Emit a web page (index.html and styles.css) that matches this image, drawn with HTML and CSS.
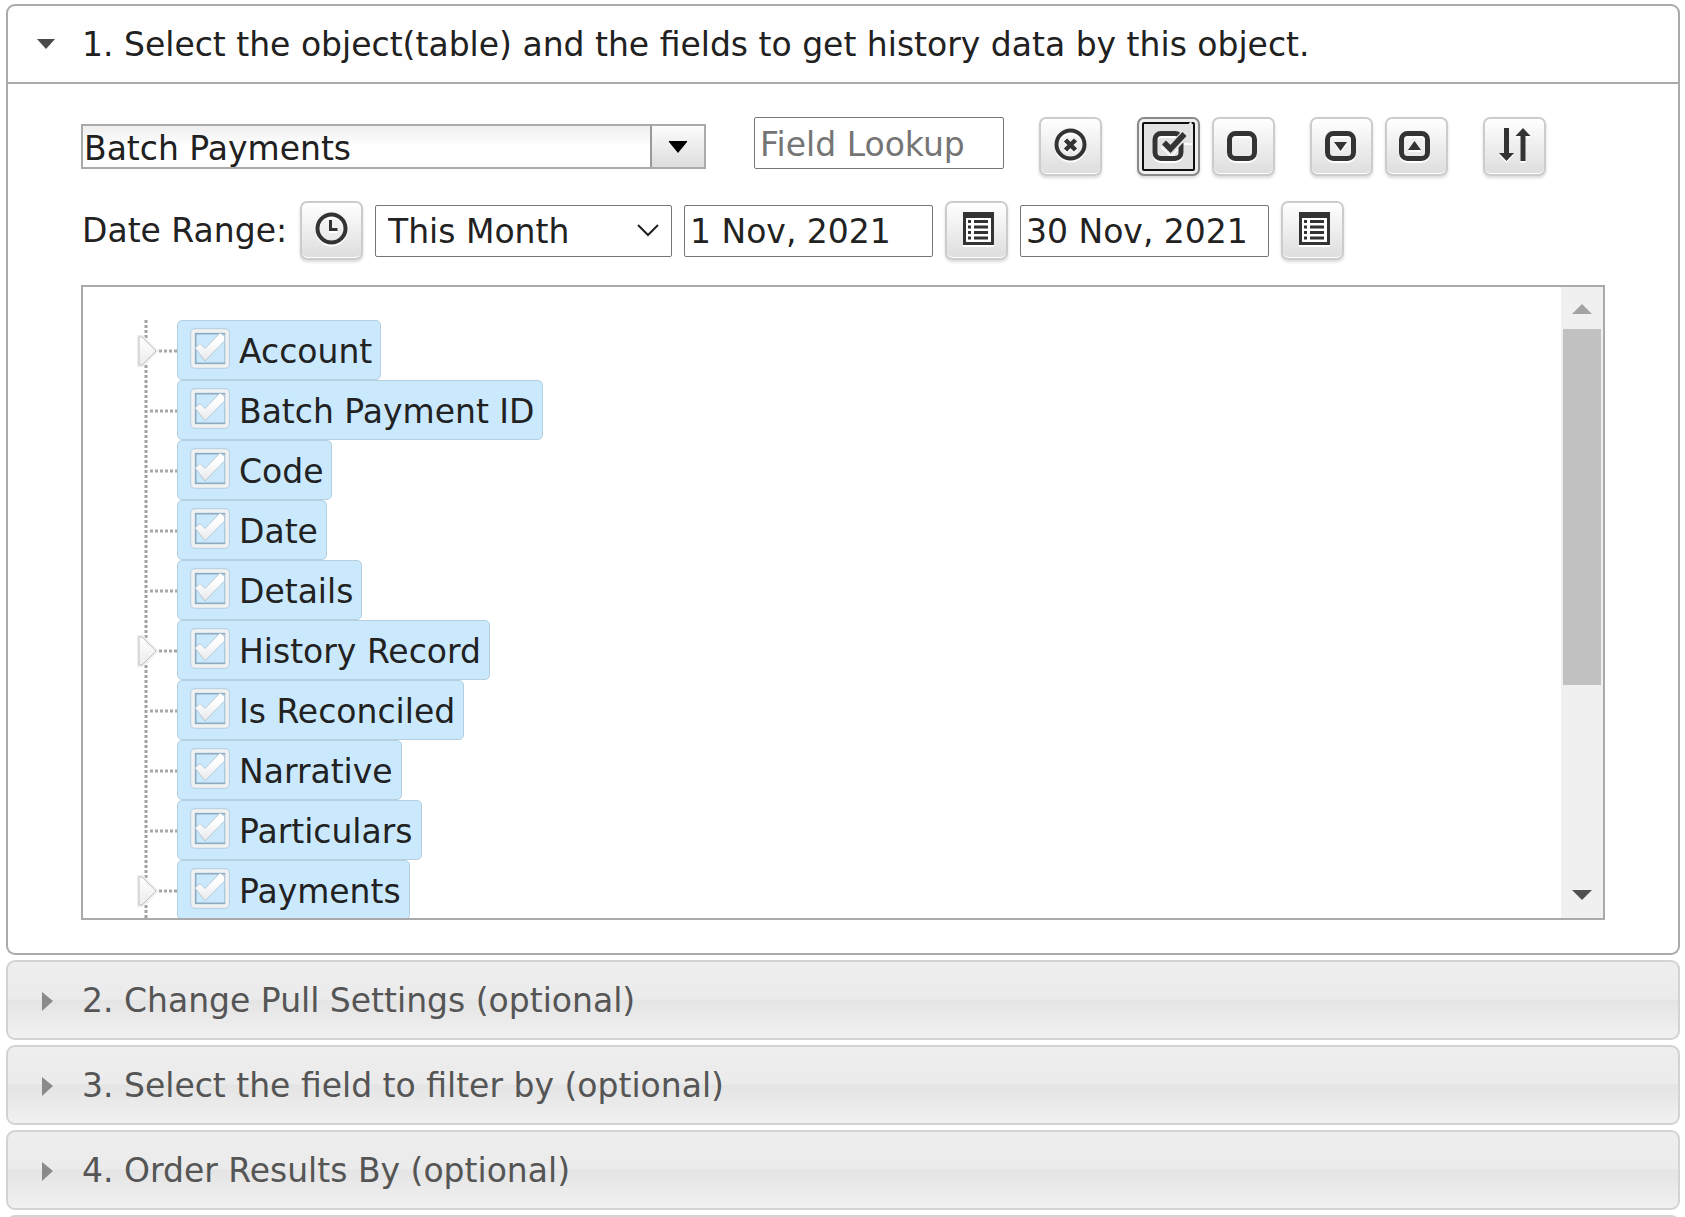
FILE: index.html
```html
<!DOCTYPE html>
<html lang="en">
<head>
<meta charset="utf-8">
<meta name="viewport" content="width=device-width, initial-scale=1.0">
<title>Pull History</title>
<link rel="stylesheet" href="styles.css">
</head>
<body>
<!-- shared shapes -->
<svg class="sprite" aria-hidden="true">
  <defs>
    <linearGradient id="arrowFill" x1="0" y1="0" x2="0" y2="1">
      <stop offset="0" stop-color="#fff"/>
      <stop offset="1" stop-color="#ececec"/>
    </linearGradient>
  </defs>
  <symbol id="branch" viewBox="0 0 94 60">
    <path d="M63 0V60" stroke="#a2a2a2" stroke-width="3" stroke-dasharray="3 2"/>
    <path d="M67 31H94" stroke="#a8a8a8" stroke-width="3" stroke-dasharray="3 2"/>
  </symbol>
  <symbol id="branch-closed" viewBox="0 0 94 60">
    <path d="M63 0V60" stroke="#a2a2a2" stroke-width="3" stroke-dasharray="3 2"/>
    <path d="M76 31H94" stroke="#a8a8a8" stroke-width="3" stroke-dasharray="3 2"/>
    <path d="M56 17L59 17L73 31L59 45L56 45Z" fill="url(#arrowFill)" stroke="#eee" stroke-width="4"/>
    <path d="M56 17L59 17L73 31L59 45L56 45Z" fill="url(#arrowFill)" stroke="#c2c2c2" stroke-width="1"/>
  </symbol>
  <symbol id="list" viewBox="0 0 59 55">
    <path d="M16 9H47V42H16ZM19 15V39H44V15Z" fill="#333" fill-rule="evenodd"/>
    <path d="M19 15H44V39H19Z" fill="#fff"/>
    <path d="M21 18.500H24M21 24H24M21 29.500H24M21 35H24M27 18.500H41M27 24H41M27 29.500H41M27 35H41" stroke="#333" stroke-width="3"/>
  </symbol>
  <symbol id="closed" viewBox="0 0 28 24"><path d="M9 4L20 13L9 23Z" fill="#8a8a8a"/></symbol>
</svg>

<div class="accordion">
  <button class="header active" type="button" aria-expanded="true">
    <svg class="arrow" viewBox="0 0 28 24"><path d="M4 7H22L13 17Z" fill="#4a4a4a"/></svg>
    <span>1. Select the object(table) and the fields to get history data by this object.</span>
  </button>
  <div class="content">
    <div class="row">
      <div class="combobox">
        <input type="text" value="Batch Payments" aria-label="Object">
        <button type="button" aria-label="Show all items">
          <svg width="18" height="12" viewBox="0 0 18 12"><path d="M0 0H18V1L9 12L0 1Z" fill="#000"/></svg>
        </button>
      </div>
      <input class="field lookup" type="text" placeholder="Field Lookup" aria-label="Field Lookup">
      <div class="tools">
        <button class="tool" type="button" aria-label="Clear lookup">
          <svg viewBox="0 0 59 55" fill="none" stroke="#333"><circle cx="29.500" cy="25.500" r="14" stroke-width="4"/><path d="M24.500 21L34.500 31M34.500 21L24.500 31" stroke-width="4.500"/></svg>
        </button>
      </div>
      <div class="tools">
        <button class="tool focused" type="button" aria-label="Select all">
          <svg viewBox="0 0 59 55" fill="none"><rect x="16" y="14.500" width="26" height="25" rx="6" stroke="#333" stroke-width="5"/><path d="M25 23L32 30L48 13V24" stroke="#e2e2e2" stroke-width="9"/><path d="M25 23.500L31.500 30L45.500 15" stroke="#333" stroke-width="5.500"/></svg>
        </button>
        <button class="tool" type="button" aria-label="Unselect all">
          <svg viewBox="0 0 59 55" fill="none" stroke="#333"><rect x="15.500" y="14.500" width="25" height="25" rx="6" stroke-width="5"/></svg>
        </button>
      </div>
      <div class="tools">
        <button class="tool" type="button" aria-label="Expand all">
          <svg viewBox="0 0 59 55"><rect x="15.500" y="14.500" width="26" height="25" rx="6" fill="none" stroke="#333" stroke-width="5"/><path d="M22 23H35L28.500 32Z" fill="#333"/></svg>
        </button>
        <button class="tool" type="button" aria-label="Collapse all">
          <svg viewBox="0 0 59 55"><rect x="14.500" y="14.500" width="26" height="25" rx="6" fill="none" stroke="#333" stroke-width="5"/><path d="M21 31H34L27.500 22Z" fill="#333"/></svg>
        </button>
      </div>
      <div class="tools">
        <button class="tool" type="button" aria-label="Sort">
          <svg viewBox="0 0 59 55" fill="#333"><path d="M19 9H24V34H29L21.500 42L14 34H19ZM35.500 42H40.500V17H45.500L38 9L30.500 17H35.500Z"/></svg>
        </button>
      </div>
    </div>

    <div class="row dates">
      <label class="range-label" for="range">Date Range:</label>
      <button class="tool" type="button" aria-label="Date presets">
        <svg viewBox="0 0 59 55" fill="none" stroke="#333"><circle cx="29.500" cy="25.500" r="14" stroke-width="4"/><path d="M28.500 17V26.500H35.500" stroke-width="3"/></svg>
      </button>
      <select class="field" id="range">
        <option>This Month</option>
      </select>
      <input class="field" type="text" value="1 Nov, 2021" aria-label="Start date">
      <button class="tool" type="button" aria-label="Pick start date"><svg><use href="#list"/></svg></button>
      <input class="field" type="text" value="30 Nov, 2021" aria-label="End date">
      <button class="tool" type="button" aria-label="Pick end date"><svg><use href="#list"/></svg></button>
    </div>

    <div class="tree">
      <ul>
        <li><svg class="branch"><use href="#branch-closed"/></svg><label><input type="checkbox" checked>Account</label></li>
        <li><svg class="branch"><use href="#branch"/></svg><label><input type="checkbox" checked>Batch Payment ID</label></li>
        <li><svg class="branch"><use href="#branch"/></svg><label><input type="checkbox" checked>Code</label></li>
        <li><svg class="branch"><use href="#branch"/></svg><label><input type="checkbox" checked>Date</label></li>
        <li><svg class="branch"><use href="#branch"/></svg><label><input type="checkbox" checked>Details</label></li>
        <li><svg class="branch"><use href="#branch-closed"/></svg><label><input type="checkbox" checked>History Record</label></li>
        <li><svg class="branch"><use href="#branch"/></svg><label><input type="checkbox" checked>Is Reconciled</label></li>
        <li><svg class="branch"><use href="#branch"/></svg><label><input type="checkbox" checked>Narrative</label></li>
        <li><svg class="branch"><use href="#branch"/></svg><label><input type="checkbox" checked>Particulars</label></li>
        <li><svg class="branch"><use href="#branch-closed"/></svg><label><input type="checkbox" checked>Payments</label></li>
      </ul>
      <div class="scrollbar">
        <svg viewBox="0 0 42 42"><path d="M11 27H31L21 17Z" fill="#a3a3a3"/></svg>
        <div class="track"><div class="thumb"></div></div>
        <svg viewBox="0 0 42 42"><path d="M11 14H31L21 24Z" fill="#505050"/></svg>
      </div>
    </div>
  </div>

  <button class="header" type="button" aria-expanded="false">
    <svg class="arrow"><use href="#closed"/></svg>
    <span>2. Change Pull Settings (optional)</span>
  </button>
  <button class="header" type="button" aria-expanded="false">
    <svg class="arrow"><use href="#closed"/></svg>
    <span>3. Select the field to filter by (optional)</span>
  </button>
  <button class="header" type="button" aria-expanded="false">
    <svg class="arrow"><use href="#closed"/></svg>
    <span>4. Order Results By (optional)</span>
  </button>
  <div class="header"></div>
</div>
</body>
</html>
```
FILE: styles.css
```css
* {
    box-sizing: border-box;
}

body {
    margin: 0;
    height: 100vh;
    overflow: hidden;
    background: #fff;
    color: #222;
}

body, button, input, select {
    font-family: "DejaVu Sans", Verdana, sans-serif;
    font-size: 33px;
}

ul {
    margin: 0;
    padding: 0;
    list-style: none;
}

.sprite {
    position: absolute;
    width: 0;
    height: 0;
}

.accordion {
    padding: 4px 5px 0 6px;
}

/* section headers */
.header {
    display: flex;
    align-items: center;
    gap: 21px;
    width: 100%;
    height: 80px;
    margin: 0 0 5px;
    padding: 0 25px;
    border: 2px solid #d3d3d3;
    border-radius: 9px;
    background: linear-gradient(#eee, #ebebeb 49%, #e4e4e4 50%, #f1f1f1);
    color: #555;
    text-align: left;
}

.header span {
    padding-top: 1px;
}

.header.active {
    margin: 0;
    border-color: #aaa;
    border-radius: 9px 9px 0 0;
    background: #fefefe;
    color: #212121;
}

.arrow {
    flex: none;
    width: 28px;
    height: 24px;
}

.content {
    display: flex;
    flex-direction: column;
    gap: 25px;
    margin-bottom: 5px;
    padding: 33px 73px;
    border: 2px solid #aaa;
    border-top: 0;
    border-radius: 0 0 9px 9px;
}

.row {
    display: flex;
    align-items: center;
    gap: 35px;
}

.dates {
    gap: 12px;
}

.range-label {
    width: 207px;
    padding-left: 1px;
    white-space: nowrap;
}

/* object picker */
.combobox {
    display: flex;
    width: 625px;
    height: 45px;
    margin-right: 13px;
    border: 2px solid #aaa;
}

.combobox input {
    flex: 1;
    min-width: 0;
    padding: 3px 0 0 1px;
    border: 0;
    background: linear-gradient(#eee, #fff 50%);
    color: #212121;
}

.combobox button {
    display: flex;
    align-items: center;
    justify-content: center;
    width: 54px;
    padding: 0;
    border: 0;
    border-left: 2px solid #999;
    background: linear-gradient(#fcfcfc, #ddd);
}

.field {
    width: 250px;
    height: 52px;
    padding: 2px 5px 0;
    border: 1px solid #767676;
    border-radius: 2px;
    background-color: #fff;
    color: #222;
}

.field::placeholder {
    color: #757575;
    opacity: 1;
}

.lookup {
    align-self: flex-start;
}

.dates .field {
    width: 249px;
}

.dates select.field {
    width: 297px;
    padding: 2px 12px 0;
    appearance: none;
    background-image: url("data:image/svg+xml,%3Csvg xmlns='http://www.w3.org/2000/svg' width='22' height='13'%3E%3Cpath d='M1 1L11 11L21 1' fill='none' stroke='%23222' stroke-width='2'/%3E%3C/svg%3E");
    background-position: right 12px center;
    background-repeat: no-repeat;
}

/* icon buttons */
.tools {
    display: flex;
    gap: 12px;
}

.tool {
    flex: none;
    width: 63px;
    height: 59px;
    padding: 0;
    border: 2px solid #ccc;
    border-radius: 7px;
    background: linear-gradient(#fff, #ddd);
    box-shadow: inset 0 -1px 0 #fff, 0 2px 3px rgba(0, 0, 0, 0.15);
}

.tool svg {
    display: block;
    width: 59px;
    height: 55px;
    filter: drop-shadow(0 2px 0 #fff);
}

.tool.focused {
    border-color: #8a8a8a;
    background: #e2e2e2;
    box-shadow: inset 0 0 0 3px #efefef, 0 2px 3px rgba(0, 0, 0, 0.15);
    outline: 2px solid #101010;
    outline-offset: -7px;
}

/* field tree */
.tree {
    display: flex;
    justify-content: space-between;
    height: 635px;
    border: 2px solid #aaa;
    overflow: hidden;
}

.tree ul {
    padding-top: 33px;
}

.tree li {
    display: flex;
    height: 60px;
}

.branch {
    width: 94px;
    height: 60px;
}

.tree label {
    display: flex;
    align-items: center;
    gap: 8px;
    padding: 2px 8px 0 12px;
    border: 1px solid #b6cfdf;
    border-radius: 5px;
    background: #cbe9fd;
    white-space: nowrap;
}

.tree input {
    width: 41px;
    height: 41px;
    margin: 0 0 6px;
    appearance: none;
    background-image: url("data:image/svg+xml,%3Csvg xmlns='http://www.w3.org/2000/svg' viewBox='0 0 41 41'%3E%3ClinearGradient id='a' x2='0' y2='1'%3E%3Cstop offset='.3' stop-color='%23fff'/%3E%3Cstop offset='1' stop-color='%23e6e8ea'/%3E%3C/linearGradient%3E%3Cg fill='none'%3E%3Crect x='1' y='1' width='38' height='39' rx='4' stroke='%23bdd3e1' stroke-width='2'/%3E%3Crect x='5.500' y='5.500' width='30' height='30' stroke='%238eabbf' stroke-width='2'/%3E%3Crect x='3' y='3' width='34' height='35' rx='2' stroke='%23eff1f3' stroke-width='3.500'/%3E%3C/g%3E%3Cpath d='M5 20L10 15.500L15 20.500L30 5L34.500 8V13L15 33Z' fill='url(%23a)' stroke='%23b4c8d6' stroke-width='1'/%3E%3C/svg%3E");
}

.scrollbar {
    display: flex;
    flex-direction: column;
    width: 42px;
    background: #f0f0f0;
}

.scrollbar svg {
    flex: none;
    width: 42px;
    height: 42px;
}

.track {
    flex: 1;
    padding: 0 2px;
}

.thumb {
    height: 65%;
    background: #c1c1c1;
}
```
